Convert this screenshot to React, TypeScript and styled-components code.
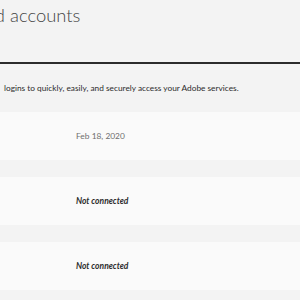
import React from "react"
import styled, { createGlobalStyle } from "styled-components"

const GlobalStyle = createGlobalStyle`
  body {
    margin: 0;
    background: #f3f3f3;
    font-family: Lato, "Open Sans", sans-serif;
    overflow: hidden;
  }
`

const Page = styled.div`
  width: 300px;
  height: 300px;
  overflow: hidden;
`

const Header = styled.header`
  padding-top: 4px;
  height: 58px;
  border-bottom: 2px solid #2c2c2c;
`

const Title = styled.h1`
  margin: 0 0 0 -82px;
  font-size: 18.4px;
  font-weight: 300;
  line-height: 1.2;
  color: #444;
  white-space: nowrap;
`

const Intro = styled.p`
  margin: 20px 0 0 4px;
  font-size: 8.3px;
  line-height: 1.2;
  color: #2c2c2c;
  white-space: nowrap;
`

const AccountList = styled.ul`
  list-style: none;
  margin: 18px 0 0;
  padding: 0;
  display: flex;
  flex-direction: column;
  gap: 17px;
`

const AccountRow = styled.li`
  height: 48px;
  background: #fafafa;
  display: flex;
  align-items: center;
  padding-left: 76px;
`

const Status = styled.span<{ $connected?: boolean }>`
  font-size: ${p => (p.$connected ? "8.4px" : "8.5px")};
  font-weight: ${p => (p.$connected ? 400 : 700)};
  font-style: ${p => (p.$connected ? "normal" : "italic")};
  color: ${p => (p.$connected ? "#6e6e6e" : "#2c2c2c")};
`

const accounts = [
  { id: "apple", status: "Feb 18, 2020", connected: true },
  { id: "facebook", status: "Not connected", connected: false },
  { id: "google", status: "Not connected", connected: false },
]

const App = () => {
  return (
    <Page>
      <GlobalStyle />
      <Header>
        <Title>Connected accounts</Title>
      </Header>
      <Intro>logins to quickly, easily, and securely access your Adobe services.</Intro>
      <AccountList>
        {accounts.map(a => (
          <AccountRow key={a.id}>
            <Status $connected={a.connected}>{a.status}</Status>
          </AccountRow>
        ))}
      </AccountList>
    </Page>
  )
}

export default App
